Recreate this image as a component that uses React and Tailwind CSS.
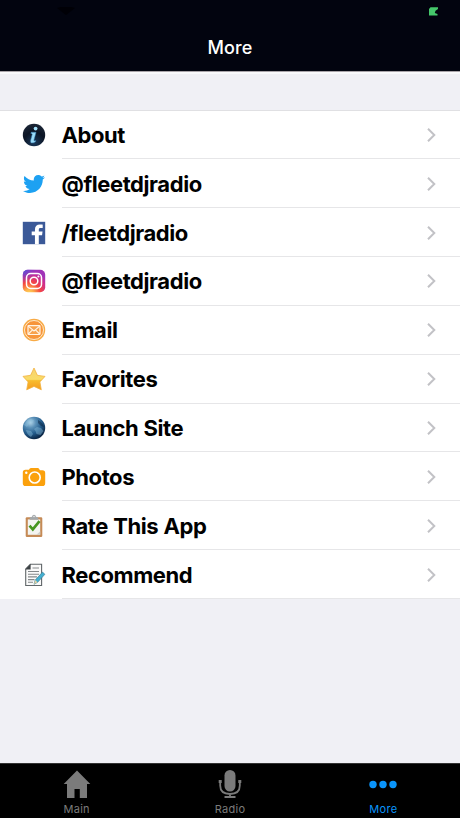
import React from "react";
import { FaTwitter } from "react-icons/fa";

function InfoIcon() {
  return (
    <svg viewBox="0 0 24 24" className="size-6">
      <defs>
        <radialGradient id="info" cx="50%" cy="85%" r="80%">
          <stop offset="0" stopColor="#1b3a5c" />
          <stop offset="0.6" stopColor="#0b1424" />
          <stop offset="1" stopColor="#1a2434" />
        </radialGradient>
      </defs>
      <circle cx="12" cy="12" r="11.2" fill="url(#info)" />
      <circle cx="13.6" cy="5.6" r="1.900" fill="#a5e2fb" />
      <path d="M9.200 9.200h4.900l-2.200 8q-.1.900 1.900.3l-.3 1.200q-2 1.500-4 1.200-1.400-.3-.9-2.400l1.600-6.300q.1-.8-1.400-.8z" fill="#9adcf9" stroke="#2d79b0" strokeWidth=".5" />
    </svg>
  );
}

function TwitterIcon() {
  return <FaTwitter className="size-[22px] text-[#1da1f2]" />;
}

function FacebookIcon() {
  return (
    <svg viewBox="0 0 24 24" className="size-6">
      <path d="M.8.8h22.400v22.400H.8z" fill="#3b5998" />
      <path d="M16.800 23.200v-9h3.250l.5-3.600H16.800V8.700c0-1.100.35-1.750 1.900-1.750h2V3.700c-.35-.05-1.550-.15-2.900-.15-2.900 0-4.850 1.700-4.850 4.900v2.150H9.700v3.600h3.250v9z" fill="#fff" />
    </svg>
  );
}

function InstagramIcon() {
  return (
    <svg viewBox="0 0 24 24" className="size-6">
      <defs>
        <radialGradient id="igWarm" cx="28%" cy="106%" r="100%">
          <stop offset="0" stopColor="#ffd75e" />
          <stop offset="0.2" stopColor="#fdb04a" />
          <stop offset="0.5" stopColor="#f5483f" />
          <stop offset="0.8" stopColor="#d02d8c" />
          <stop offset="1" stopColor="#a033b8" />
        </radialGradient>
        <radialGradient id="igCool" cx="0%" cy="0%" r="60%">
          <stop offset="0" stopColor="#4a55d8" />
          <stop offset="1" stopColor="#7a3fd0" stopOpacity="0" />
        </radialGradient>
      </defs>
      <rect x=".8" y=".8" width="22.400" height="22.400" rx="5" fill="url(#igWarm)" />
      <rect x=".8" y=".8" width="22.400" height="22.400" rx="5" fill="url(#igCool)" />
      <g fill="none" stroke="#fff" strokeWidth="1.500">
        <rect x="4.500" y="4.500" width="15" height="15" rx="4.200" />
        <circle cx="12" cy="12" r="3.800" />
      </g>
      <circle cx="16.400" cy="7.600" r="1" fill="#fff" />
    </svg>
  );
}

function EmailIcon() {
  return (
    <svg viewBox="0 0 24 24" className="size-6">
      <circle cx="12" cy="12" r="11.200" fill="#f8aa45" />
      <circle cx="12" cy="12" r="9.500" fill="#f7953a" stroke="#fff0d8" strokeWidth=".9" />
      <rect x="6" y="7.700" width="12" height="8.800" rx=".7" fill="#f7a24d" stroke="#fff5e6" strokeWidth="1.200" />
      <path d="M6.300 8.200 12 13l5.700-4.800M6.300 16l4.200-4.200M17.700 16l-4.200-4.200" fill="none" stroke="#fff5e6" strokeWidth="1.100" />
    </svg>
  );
}

function StarIcon() {
  return (
    <svg viewBox="0 0 24 24" className="size-6">
      <defs>
        <linearGradient id="star" x1="0" y1="0" x2="0" y2="1">
          <stop offset="0" stopColor="#f6d272" />
          <stop offset="0.52" stopColor="#f9dc68" />
          <stop offset="0.58" stopColor="#f8bc2d" />
          <stop offset="1" stopColor="#f49a1f" />
        </linearGradient>
      </defs>
      <path d="M12 1 15.400 8.300 23 9.400 17.900 14.900 19.300 22.800 12 19.400 4.700 22.800 6.100 14.900 1 9.400 8.600 8.300z" fill="url(#star)" stroke="#f3b23f" strokeWidth=".8" strokeLinejoin="round" />
    </svg>
  );
}

function GlobeIcon() {
  return (
    <svg viewBox="0 0 24 24" className="size-6">
      <defs>
        <radialGradient id="globe" cx="34%" cy="25%" r="78%">
          <stop offset="0" stopColor="#b4d5e8" />
          <stop offset="0.3" stopColor="#5d93ba" />
          <stop offset="0.65" stopColor="#235c8c" />
          <stop offset="1" stopColor="#0a2443" />
        </radialGradient>
      </defs>
      <circle cx="12" cy="12" r="11.200" fill="url(#globe)" />
      <path d="M2 9q3-6 7-6l3 1.500-1.500 2.500L7 7.500 5 11zM12 13l3-2 4 1 2.500 3-3 4-4-1-1-3zM4 14l5 1 2 3-2 3q-4-2-5-7z" fill="#8fc3e0" opacity=".42" />
      <path d="M16 4q5 3 6 7l-3-1-3-3z" fill="#08213e" opacity=".5" />
    </svg>
  );
}

function CameraIcon() {
  return (
    <svg viewBox="0 0 24 24" className="size-6">
      <path d="M3.500 4.700H7q.5-1.800 2-1.800h6.800q1.200 0 2.100 2.400h2.600q2.700 0 2.700 2.700v10.300q0 2.800-2.700 2.800h-17Q.8 21.100.8 18.300V7.400q0-2.700 2.700-2.700z" fill="#fba10d" />
      <circle cx="12.700" cy="12.500" r="5.500" fill="none" stroke="#fff" strokeWidth="1.600" />
      <circle cx="4.300" cy="7.700" r="1.200" fill="#fff" />
    </svg>
  );
}

function ClipboardIcon() {
  return (
    <svg viewBox="0 0 24 24" className="size-6">
      <rect x="3.700" y="3.300" width="16.600" height="19.700" rx="1.200" fill="#c58a56" />
      <path d="M5.800 5.400h12.400v15.400H5.800z" fill="#f3f4f1" />
      <path d="M14.500 20.800h3.700v-3.600z" fill="#cfcfca" />
      <path d="M7.700 4.300q.2-1.500 2.300-1.600.3-2 2-2t2 2q2.100.1 2.300 1.600v1.500H7.700z" fill="#a3a8ab" />
      <circle cx="12" cy="2.500" r=".8" fill="#eee" />
      <path d="m7.500 11.700 3.300 3.700 6.700-8.200" fill="none" stroke="#45961f" strokeWidth="2.700" />
    </svg>
  );
}

function DocumentIcon() {
  return (
    <svg viewBox="0 0 24 24" className="size-6">
      <path d="M8.300 1.300h11.300v21.200H3.700V6z" fill="#fafafa" stroke="#62676a" strokeWidth="1.100" />
      <path d="M8.600 1v5.400H3.300z" fill="#3c4144" />
      <path d="M10.500 5h6.500M6 8.500h11M6 11.200h11M6 13.900h9M6 16.600h6.500M6 19.300h5" stroke="#85898b" strokeWidth="1.100" />
      <path d="m12 21.300 1.200-4.200 7.300-8 2.400 2.200-7.300 8z" fill="#43afd0" stroke="#34758d" strokeWidth=".6" />
      <path d="m12 21.300 1.200-4.200 2.400 2.200z" fill="#e2d1a4" />
    </svg>
  );
}

const rows = [
  { label: "About", Icon: InfoIcon },
  { label: "@fleetdjradio", Icon: TwitterIcon },
  { label: "/fleetdjradio", Icon: FacebookIcon },
  { label: "@fleetdjradio", Icon: InstagramIcon },
  { label: "Email", Icon: EmailIcon },
  { label: "Favorites", Icon: StarIcon },
  { label: "Launch Site", Icon: GlobeIcon },
  { label: "Photos", Icon: CameraIcon },
  { label: "Rate This App", Icon: ClipboardIcon },
  { label: "Recommend", Icon: DocumentIcon },
];

function Row({ label, Icon }) {
  return (
    <li className="flex h-[48.85px] pl-[21.500px]">
      <div className="flex w-10 shrink-0 items-center">
        <span className="flex w-6 justify-center"><Icon /></span>
      </div>
      <div className="flex flex-1 items-center justify-between border-b border-[#e6e6e8] pt-px pr-6">
        <span className="text-[22px] leading-7 font-[650] tracking-[-0.42px] whitespace-nowrap [word-spacing:0.5px]">{label}</span>
        <svg viewBox="0 0 9 14" className="h-3.5 w-[9px]" fill="none" stroke="#c2c2c6" strokeWidth="2">
          <path d="m1 .8 6.300 6.200L1 13.200" />
        </svg>
      </div>
    </li>
  );
}

function Tab({ label, active, children }) {
  return (
    <div className={`flex flex-1 flex-col items-center ${active ? "text-[#0a95fb]" : "text-[#7b7b7b]"}`}>
      <svg viewBox="0 0 30 30" className="mt-[5px] size-[30px]" fill="currentColor">{children}</svg>
      <span className="mt-0.5 text-[11px] leading-4 tracking-[0.3px]">{label}</span>
    </div>
  );
}

export default function App() {
  return (
    <div className="flex h-[818px] w-[460px] flex-col overflow-hidden bg-[#f0f0f5] font-['Inter','Liberation_Sans',sans-serif] text-black">
      <header className="flex h-[71.500px] shrink-0 flex-col border-b border-[#a9a4a9] bg-[#02040f]">
        <div className="flex h-6 justify-between pt-[7px] pr-[22px] pl-[57px]">
          <svg viewBox="0 0 18 9" className="h-[9px] w-[18px]" fill="#000006">
            <path d="M0 1q9-3 18 0L9 8z" />
          </svg>
          <svg viewBox="0 0 9 9" className="size-[9px]">
            <path d="M1.500.3H9V2L6.500 3.800 5.800 6 8.500 7v1.500H0V2z" fill="#45c76b" />
          </svg>
        </div>
        <h1 className="text-center text-[18px] leading-[47px] font-[550] tracking-[0.15px] text-white">More</h1>
      </header>
      <main className="flex-1 border-t-2 border-[#f9f9fb] pt-9">
        <ul className="border-t border-[#e0e0e3] bg-white">
          {rows.map((row, i) => (
            <Row key={i} label={row.label} Icon={row.Icon} />
          ))}
        </ul>
      </main>
      <nav className="flex h-[55px] shrink-0 border-t border-[#333] bg-black">
        <Tab label="Main">
          <path d="M15 1.500 28.300 15H25v14h-7.200v-9h-5.300v9H5V15H1.700z" />
        </Tab>
        <Tab label="Radio">
          <rect x="9.500" y="1" width="11" height="21.500" rx="5.500" />
          <path d="M5.200 12v4.500q0 8.500 9.800 8.500t9.800-8.500V12M15 25v3M9.500 28h11" fill="none" stroke="currentColor" strokeWidth="1.800" />
          <path d="M3.700 11h3v3h-3zM23.300 11h3v3h-3z" />
        </Tab>
        <Tab label="More" active>
          <circle cx="5" cy="15.500" r="3.700" />
          <circle cx="15" cy="15.500" r="3.700" />
          <circle cx="25" cy="15.500" r="3.700" />
        </Tab>
      </nav>
    </div>
  );
}
